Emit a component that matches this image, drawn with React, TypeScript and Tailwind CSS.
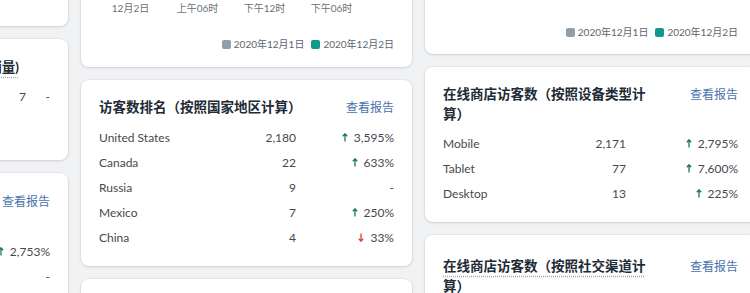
import React from 'react';

const card = 'rounded-lg bg-white shadow-[0_0_0_1px_rgba(63,63,68,0.04),0_1px_3px_rgba(63,63,68,0.15)]';

function Arrow({ down }: { down?: boolean }) {
  return (
    <svg width="6" height="9" viewBox="0 0 6 9" className="mr-[6px] inline-block">
      {down ? (
        <path d="M3 0.6V8.2 M0.8 5.8 L3 8.2 L5.2 5.8" fill="none" stroke="#d9442b" strokeWidth="1.3" />
      ) : (
        <path d="M3 8.4V0.8 M0.8 3.2 L3 0.8 L5.2 3.2" fill="none" stroke="#177a52" strokeWidth="1.3" />
      )}
    </svg>
  );
}

type Row = { name: string; value: string; change: string; dir?: 'up' | 'down' };

function Rows({ rows, cols }: { rows: Row[]; cols: string }) {
  return (
    <div className="text-[12px] text-[#45494d]">
      {rows.map((r, i) => (
        <div key={i} className={`grid h-[25px] items-center ${cols}`}>
          <span>{r.name}</span>
          <span className="text-right">{r.value}</span>
          <span className="flex items-center justify-end">
            {r.dir && <Arrow down={r.dir === 'down'} />}
            {r.change}
          </span>
        </div>
      ))}
    </div>
  );
}

function Header({ title, link = true, dotted, narrow }: { title: string; link?: boolean; dotted?: boolean; narrow?: boolean }) {
  return (
    <div className="flex items-start justify-between">
      <h2
        className={`text-[13.5px] leading-[20px] font-bold text-[#212b36] ${narrow ? 'max-w-[208px]' : ''} ${
          dotted ? 'underline decoration-dotted decoration-[#a3a8ad] underline-offset-[5px]' : ''
        }`}
      >
        {title}
      </h2>
      {link && <a className="mt-px text-[12px] leading-[20px] text-[#4a72ad] whitespace-nowrap">查看报告</a>}
    </div>
  );
}

function Legend() {
  return (
    <div className="flex items-center justify-end gap-[3px] text-[10px] leading-[12px] text-[#5c6670]">
      <span className="h-[9px] w-[9px] rounded-[2px] bg-[#919eab]" />
      <span>2020年12月1日</span>
      <span className="ml-[4px] h-[9px] w-[9px] rounded-[2px] bg-[#11998e]" />
      <span>2020年12月2日</span>
    </div>
  );
}

export default function App() {
  return (
    <div className="h-[293px] w-[750px] overflow-hidden bg-[#f1f2f3] font-['Lato','Noto_Sans_CJK_SC',sans-serif]">
      <div className="ml-[-263px] flex items-start gap-[13px]">
        {/* left column, mostly off screen */}
        <div className="-mt-[94px] flex w-[331px] shrink-0 flex-col gap-[13px]">
          <div className={`${card} h-[120px]`} />
          <div className={`${card} h-[121px] px-[18px] pt-[18px]`}>
            <Header title="在线商店中最为畅销的前十名商品(按照销量)" link={false} dotted />
            <div className="mt-[7px]">
              <Rows cols="grid-cols-[1fr_40px_24px]" rows={[{ name: 'Gift Card', value: '7', change: '-' }]} />
            </div>
          </div>
          <div className={`${card} h-[200px] px-[18px] pt-[18px]`}>
            <Header title="在线商店转化率（按照流量来源计算）" narrow />
            <div className="mt-[8px]">
              <Rows
                cols="grid-cols-[1fr_60px_112px]"
                rows={[
                  { name: 'Direct', value: '2,183', change: '2,753%', dir: 'up' },
                  { name: 'Search', value: '0', change: '-' },
                ]}
              />
            </div>
          </div>
        </div>

        {/* middle column */}
        <div className="-mt-[133px] flex w-[331px] shrink-0 flex-col gap-[13px]">
          <div className={`${card} flex h-[200px] flex-col justify-end px-[18px] pb-[17px]`}>
            <div className="-ml-[2px] flex text-[10px] leading-[14px] text-[#6d7175]">
              {['12月2日', '上午06时', '下午12时', '下午06时'].map((t) => (
                <span key={t} className="w-[67px] text-center">
                  {t}
                </span>
              ))}
            </div>
            <div className="mt-[23px]">
              <Legend />
            </div>
          </div>
          <div className={`${card} px-[18px] pt-[17px] pb-[16px]`}>
            <Header title="访客数排名（按照国家地区计算）" />
            <div className="mt-[7px]">
              <Rows
                cols="grid-cols-[1fr_60px_98px]"
                rows={[
                  { name: 'United States', value: '2,180', change: '3,595%', dir: 'up' },
                  { name: 'Canada', value: '22', change: '633%', dir: 'up' },
                  { name: 'Russia', value: '9', change: '-' },
                  { name: 'Mexico', value: '7', change: '250%', dir: 'up' },
                  { name: 'China', value: '4', change: '33%', dir: 'down' },
                ]}
              />
            </div>
          </div>
          <div className={`${card} h-[120px]`} />
        </div>

        {/* right column */}
        <div className="-mt-[146px] flex w-[331px] shrink-0 flex-col gap-[13px]">
          <div className={`${card} flex h-[200px] flex-col justify-end px-[18px] pb-[16px]`}>
            <Legend />
          </div>
          <div className={`${card} px-[18px] pt-[17px] pb-[16px]`}>
            <Header title="在线商店访客数（按照设备类型计算）" narrow />
            <div className="mt-[7px]">
              <Rows
                cols="grid-cols-[1fr_60px_112px]"
                rows={[
                  { name: 'Mobile', value: '2,171', change: '2,795%', dir: 'up' },
                  { name: 'Tablet', value: '77', change: '7,600%', dir: 'up' },
                  { name: 'Desktop', value: '13', change: '225%', dir: 'up' },
                ]}
              />
            </div>
          </div>
          <div className={`${card} h-[120px] px-[18px] pt-[21px]`}>
            <Header title="在线商店访客数（按照社交渠道计算）" narrow dotted />
          </div>
        </div>
      </div>
    </div>
  );
}
